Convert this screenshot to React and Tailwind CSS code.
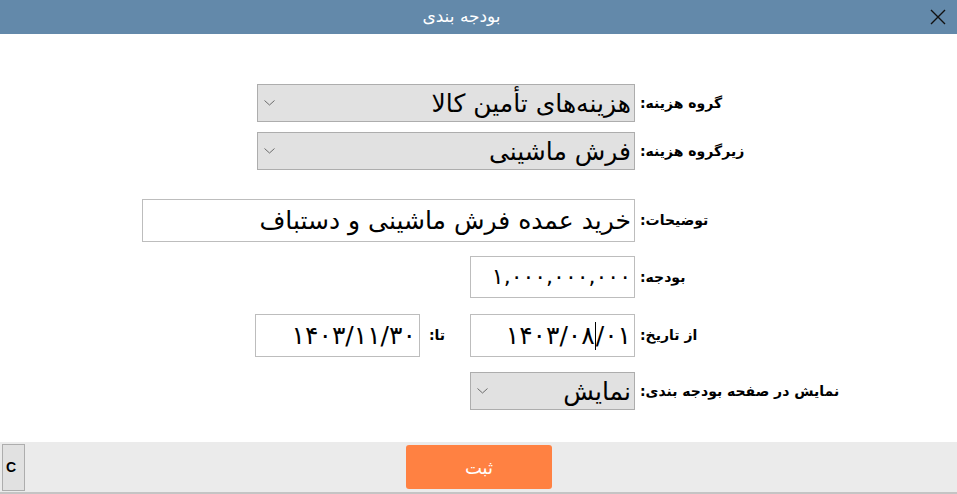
import React from "react";

const F = { fontFamily: '"DejaVu Sans", "Noto Sans", sans-serif' };

function Chevron() {
  return (
    <svg width="11" height="6" viewBox="0 0 11 6" className="shrink-0">
      <polyline points="0.5,0.5 5.5,5 10.5,0.5" fill="none" stroke="#6b6b6b" strokeWidth="1" />
    </svg>
  );
}

function Select({ width, value, size = "text-[25px]" }) {
  return (
    <div className={`${width} h-[38px] border border-[#adadad] bg-[#e1e1e1] flex items-center justify-between pl-[6px] pr-[3px]`}>
      <Chevron />
      <span dir="rtl" className={`${size} text-black leading-none`}>{value}</span>
    </div>
  );
}

function Label({ children }) {
  return (
    <div dir="rtl" className="ml-[5px] text-[14px] font-bold text-black whitespace-nowrap">{children}</div>
  );
}

function Row({ mt, children, label }) {
  return (
    <div className={`flex items-center ${mt}`}>
      <div className="w-[635px] flex justify-end items-center">{children}</div>
      <Label>{label}</Label>
    </div>
  );
}

function Box({ width, height = "h-[43px]", children }) {
  return (
    <div className={`${width} ${height} border border-[#bdbdbd] bg-white flex items-center justify-end pr-[3px]`}>
      {children}
    </div>
  );
}

export default function App() {
  return (
    <div className="w-[957px] h-[494px] flex flex-col bg-white overflow-hidden" style={F}>
      <div className="h-[34px] bg-[#6389aa] flex items-center shrink-0">
        <div className="flex-1 text-center text-white text-[17px]" dir="rtl">بودجه بندی</div>
        <div className="w-[34px] flex items-center justify-center pr-[4px]">
          <svg width="16" height="16" viewBox="0 0 16 16">
            <path d="M1 1 L15 15 M15 1 L1 15" stroke="#111" strokeWidth="1.4" />
          </svg>
        </div>
      </div>

      <div className="flex-1 flex flex-col pt-[50px]">
        <Row mt="" label="گروه هزینه:">
          <Select width="w-[378px]" value="هزینه‌های تأمین کالا" />
        </Row>
        <Row mt="mt-[10px]" label="زیرگروه هزینه:">
          <Select width="w-[378px]" value="فرش ماشینی" />
        </Row>
        <Row mt="mt-[29px]" label="توضیحات:">
          <Box width="w-[493px]">
            <span dir="rtl" className="text-[25px] text-black leading-none">خرید عمده فرش ماشینی و دستباف</span>
          </Box>
        </Row>
        <Row mt="mt-[14px]" label="بودجه:">
          <Box width="w-[165px]" height="h-[42px]">
            <span dir="ltr" className="text-[22px] text-black leading-none">۱,۰۰۰,۰۰۰,۰۰۰</span>
          </Box>
        </Row>
        <Row mt="mt-[16px]" label="از تاریخ:">
          <Box width="w-[165px]">
            <span dir="ltr" className="text-[25px] text-black leading-none">۱۴۰۳/۱۱/۳۰</span>
          </Box>
          <div dir="rtl" className="ml-[9px] mr-[25px] text-[14px] font-bold text-black">تا:</div>
          <Box width="w-[165px]">
            <span dir="ltr" className="text-[25px] text-black leading-none flex items-center">
              <span>۱۴۰۳/۰۸</span>
              <span className="inline-block w-px h-[28px] bg-black" />
              <span>/۰۱</span>
            </span>
          </Box>
        </Row>
        <Row mt="mt-[15px]" label="نمایش در صفحه بودجه بندی:">
          <Select width="w-[165px]" value="نمایش" />
        </Row>
      </div>

      <div className="h-[52px] bg-[#ebebeb] border-b-2 border-[#c4c4c4] flex items-center shrink-0">
        <div className="ml-[2px] w-[23px] h-[47px] border border-[#adadad] bg-[#e1e1e1] flex items-center pl-[3px] text-[14px] font-bold text-black" style={{ fontFamily: '"Liberation Sans", Arial, sans-serif' }}>C</div>
        <div className="ml-[381px] w-[146px] h-[44px] rounded-[3px] bg-[#ff8142] flex items-center justify-center text-white text-[18px]" dir="rtl">ثبت</div>
      </div>
    </div>
  );
}
